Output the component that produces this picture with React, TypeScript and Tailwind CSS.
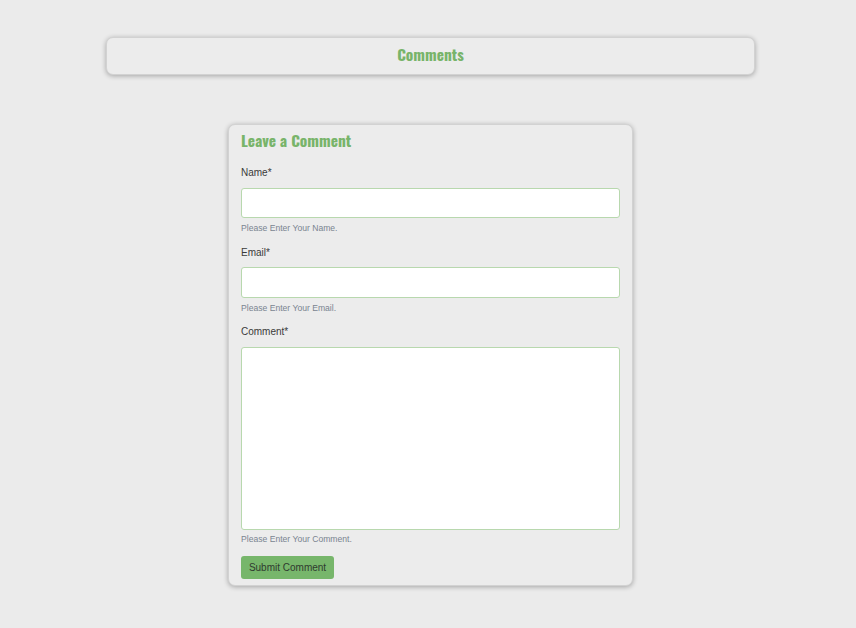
const headingFont = {
  fontFamily: '"Oswald", "Liberation Sans Narrow", "DejaVu Sans Condensed", sans-serif',
}

const fields = [
  { label: 'Name*', help: 'Please Enter Your Name.' },
  { label: 'Email*', help: 'Please Enter Your Email.' },
]

const App = () => {
  return (
    <div className="min-h-screen w-full bg-[#ebebeb] pt-[37px] font-['Liberation_Sans',Arial,sans-serif]">
      {/* page title bar */}
      <div className="ml-[106px] flex h-[38px] w-[649px] items-center justify-center rounded-[7px] border border-[#d2d2d2] bg-[#ececec] pb-[2px] shadow-[0_1px_5px_rgba(0,0,0,0.3)]">
        <h1
          className="text-[15.5px] leading-none font-bold text-[#78b46a]"
          style={headingFont}
        >
          Comments
        </h1>
      </div>

      {/* comment form */}
      <form className="mt-[49px] ml-[228px] flex w-[405px] flex-col rounded-[7px] border border-[#d2d2d2] bg-[#ececec] px-[12px] pb-[6px] shadow-[0_1px_5px_rgba(0,0,0,0.3)]">
        <h2
          className="h-[30px] text-[15.5px] leading-[30px] font-bold text-[#78b46a]"
          style={headingFont}
        >
          Leave a Comment
        </h2>

        {fields.map((field, i) => (
          <div key={field.label} className={i === 0 ? 'mt-[10px]' : 'mt-[11px]'}>
            <label className="block h-[16px] text-[10px] leading-[16px] text-[#3a3a3a]">
              {field.label}
            </label>
            <input
              type="text"
              className={`${i === 0 ? 'mt-[7px] h-[30px]' : 'mt-[6px] h-[31px]'} block w-[379px] rounded-[3px] border border-[#b8d8ae] bg-white`}
            />
            <p className="mt-[4px] h-[12px] text-[8.6px] leading-[12px] text-[#7a8490]">
              {field.help}
            </p>
          </div>
        ))}

        <div className="mt-[10px]">
          <label className="block h-[16px] text-[10px] leading-[16px] text-[#3a3a3a]">
            Comment*
          </label>
          <textarea className="mt-[7px] block h-[183px] w-[379px] resize-none rounded-[3px] border border-[#b8d8ae] bg-white" />
          <p className="mt-[3px] h-[12px] text-[8.6px] leading-[12px] text-[#7a8490]">
            Please Enter Your Comment.
          </p>
        </div>

        <button
          type="button"
          className="mt-[11px] h-[23px] w-[93px] rounded-[3px] bg-[#77b66b] text-[10px] text-[#2f3a2f]"
        >
          Submit Comment
        </button>
      </form>
    </div>
  )
}

export default App
